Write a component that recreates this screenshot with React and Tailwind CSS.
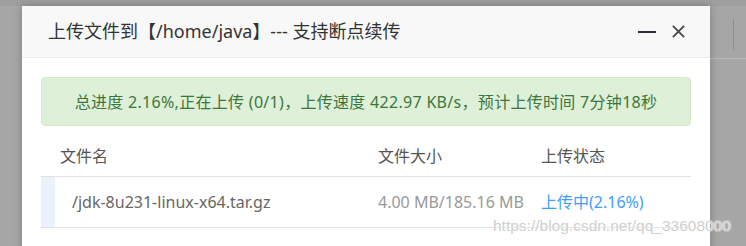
import React from "react"

const font = { fontFamily: '"Noto Sans", "Noto Sans CJK SC", sans-serif' }

const App = () => {
    return (
        <div className="relative w-[746px] h-[246px] overflow-hidden bg-[#a6a6a6]" style={font}>
            <div className="absolute left-0 top-0 w-full h-[6px] bg-[#9f9f9f]" />
            <div className="absolute right-[12px] top-[19px] w-px h-[31px] bg-[#8e8e8e]" />
            <div className="absolute right-0 top-[58px] w-[36px] h-px bg-[#b8b8b8]" />
            <div className="relative ml-[22px] mt-[6px] w-[688px] h-[260px] bg-white shadow-[0_0_8px_rgba(0,0,0,0.25)]">
                <div className="flex items-center justify-between h-[52px] pl-[26px] pr-[24px] bg-[#f8f8f8] border-b border-[#eeeeee]">
                    <div className="text-[18px] text-[#333]">上传文件到【/home/java】--- 支持断点续传</div>
                    <div className="flex items-center gap-[15px]">
                        <div className="w-[18px] h-[2px] bg-[#2e2d3c]" />
                        <svg width="15" height="15" viewBox="0 0 16 16" className="text-[#4a4a4a]">
                            <path d="M2 2 L14 14 M14 2 L2 14" stroke="currentColor" strokeWidth="2" fill="none" />
                        </svg>
                    </div>
                </div>
                <div className="px-[19px] pt-[19px]">
                    <div className="flex items-center justify-center h-[49px] border border-[#d6e9c6] bg-[#dff0d8] rounded-[4px] text-[16px] tracking-[0.3px] text-[#3c763d]">
                        总进度 2.16%,正在上传 (0/1)，上传速度 422.97 KB/s，预计上传时间 7分钟18秒
                    </div>
                    <div className="grid grid-cols-[337px_163px_1fr] h-[51px] pt-[10px] items-center text-[16px] text-[#555] border-b border-[#e2e2e2]">
                        <div className="pl-[19px]">文件名</div>
                        <div>文件大小</div>
                        <div>上传状态</div>
                    </div>
                    <div className="grid grid-cols-[337px_163px_1fr] h-[51px] items-center text-[16px] border-b border-[#e2e2e2]">
                        <div className="flex items-center h-full">
                            <div className="w-[14px] h-full bg-[#eaf3fb]" />
                            <div className="pl-[17px] text-[#666]">/jdk-8u231-linux-x64.tar.gz</div>
                        </div>
                        <div className="text-[#999]">4.00 MB/185.16 MB</div>
                        <div className="text-[#409eff]">上传中(2.16%)</div>
                    </div>
                </div>
            </div>
            <div className="absolute left-[493px] top-[214px] text-[15.5px] text-[#cfcfcf] [text-shadow:0_0_2px_#fff,0_0_1px_#fff]" style={{ fontFamily: '"Liberation Sans", sans-serif' }}>
                https://blog.csdn.net/qq_33608000
            </div>
        </div>
    )
}

export default App
